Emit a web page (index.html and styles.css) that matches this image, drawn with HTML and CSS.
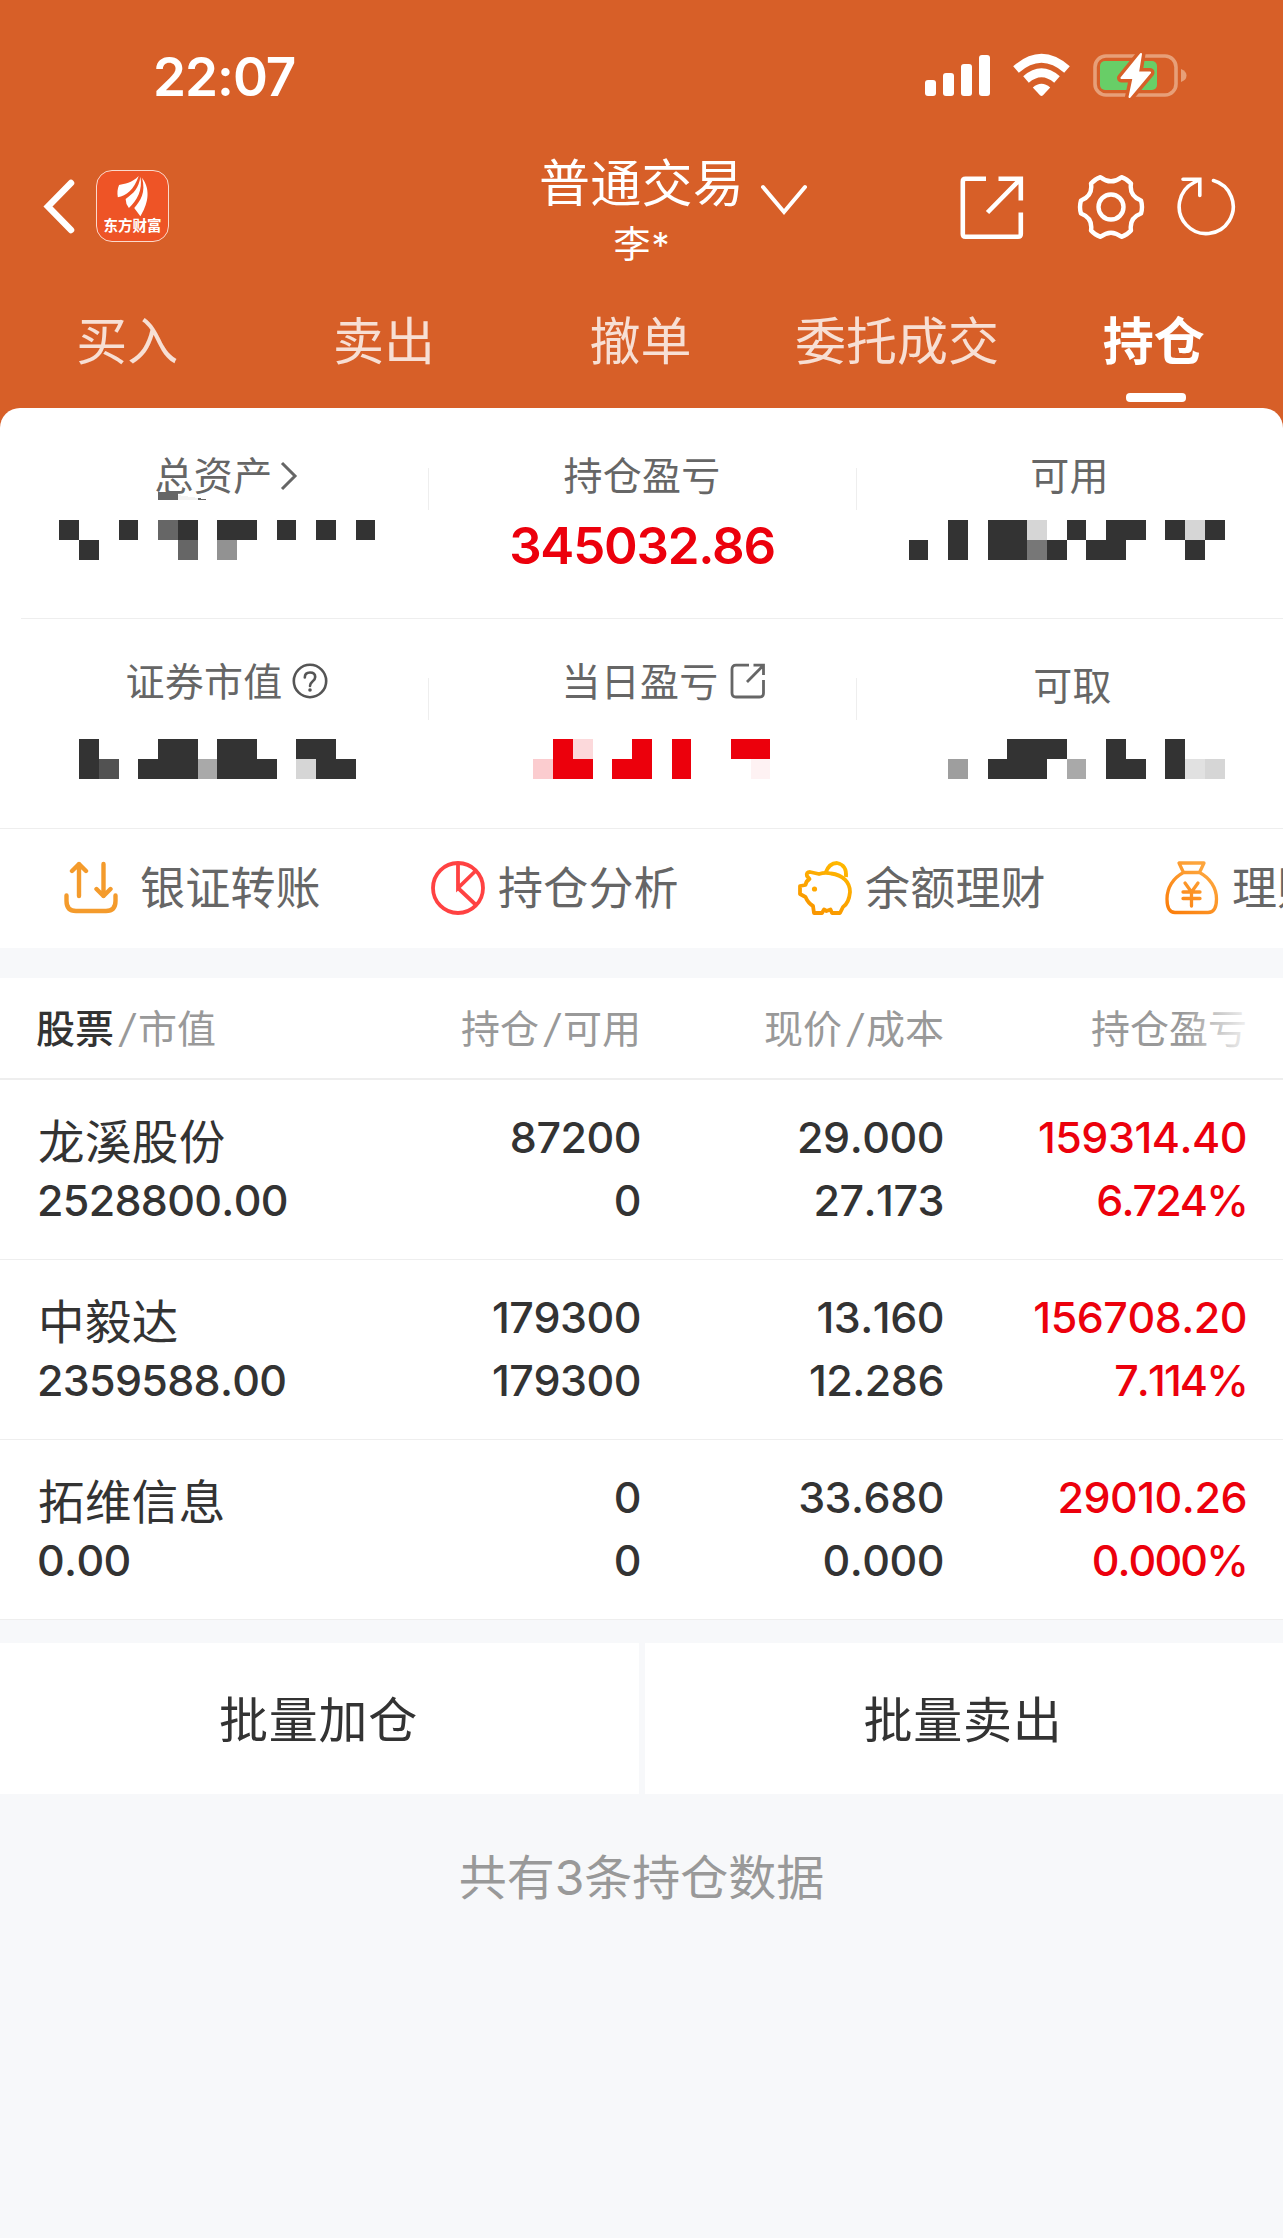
FILE: index.html
```html
<!DOCTYPE html>
<html lang="zh-CN">
<head>
    <meta charset="UTF-8">
    <meta name="viewport" content="width=device-width, initial-scale=1.0">
    <title>普通交易 - 持仓</title>
    <link rel="stylesheet" href="styles.css">
</head>
<body>
    <header class="header">
        <div class="status-bar">
            <span class="time">22:07</span>
            <svg class="status-icons" width="264" height="48" viewBox="0 0 264 48">
                <g fill="#fff">
                    <rect x="0" y="27" width="11" height="16" rx="3"/>
                    <rect x="18" y="20" width="11" height="23" rx="3"/>
                    <rect x="36" y="11" width="11" height="32" rx="3"/>
                    <rect x="54" y="2" width="11" height="41" rx="3"/>
                </g>
                <!-- wifi -->
                <g fill="none" stroke="#fff" stroke-width="8.5">
                    <path d="M91 16.500Q116.500 -6 142 16.500"/>
                    <path d="M101 26.500Q116.500 13 132 26.500"/>
                </g>
                <path d="M107.800 34.500Q116.500 27 125.200 34.500L118 42.300Q116.500 43.600 115 42.300Z" fill="#fff"/>
                <!-- battery -->
                <rect x="170" y="3" width="81" height="39" rx="11" fill="none" stroke="#e79f78" stroke-width="3.600"/>
                <path d="M256 16Q261.500 18 261.500 22.500T256 29Z" fill="#e79f78"/>
                <rect x="175" y="8" width="57" height="29" rx="5" fill="#68ce67"/>
                <path d="M216 1L196.500 25H208.500L204.500 44L225 19.500H213Z" fill="#fff" stroke="#d75f28" stroke-width="9" stroke-linejoin="round"/>
                <path d="M216 1L196.500 25H208.500L204.500 44L225 19.500H213Z" fill="#fff" stroke="#fff" stroke-width="2" stroke-linejoin="round"/>
            </svg>
        </div>

        <div class="nav">
            <div class="nav-left">
                <svg width="32" height="56" viewBox="0 0 32 56"><path d="M28 5L5 28.500L28 52" fill="none" stroke="#fff" stroke-width="6.500" stroke-linecap="round"/></svg>
                <div class="app-logo">
                    <svg width="40" height="50" viewBox="0 0 40 50" fill="#fff">
                        <path d="M27 0C18 9 10 9 3 11Q0 18 1.500 26C12 24 21 17 27 0Z"/>
                        <path d="M29 1C27 15 21 21 11 28Q11 34 15 39C25 30 32 17 29 1Z"/>
                        <path d="M31 2C36 20 29 30 21.500 39L29 49C37 36 43 18 31 2Z"/>
                    </svg>
                    <span>东方财富</span>
                </div>
            </div>
            <div class="nav-title">
                <div class="title">普通交易
                    <svg class="title-arrow" width="48" height="34" viewBox="0 0 48 34"><path d="M3 3L24 28L45 3" fill="none" stroke="#fff" stroke-width="4" stroke-linecap="round"/></svg>
                </div>
                <div class="user">李<span>*</span></div>
            </div>
            <div class="nav-right">
                <svg width="64" height="64" viewBox="0 0 64 64" fill="none" stroke="#fff" stroke-width="4.600">
                    <path d="M26 2.800H5.500Q2.800 2.800 2.800 5.500V58Q2.800 60.800 5.500 60.800H58Q60.800 60.800 60.800 58V36.500M38.500 2.800H60.800V24.500M60 3.500L27.500 36.500"/>
                </svg>
                <svg class="gear" width="68" height="66" viewBox="0 0 68 66" fill="none" stroke="#fff" stroke-width="4.400" stroke-linejoin="round">
                    <circle cx="34" cy="33" r="12.500"/>
                    <path d="M23.500 3.200Q34 11.500 44.500 3.200Q50 5 54 9.500Q52 22 64 26.500Q66 33 64 39.500Q52 44 54 56.500Q50 61 44.500 62.800Q34 54.500 23.500 62.800Q18 61 14 56.500Q16 44 4 39.500Q2 33 4 26.500Q16 22 14 9.500Q18 5 23.500 3.200Z"/>
                </svg>
                <svg class="refresh" width="60" height="60" viewBox="0 0 60 60" fill="none" stroke="#fff" stroke-width="3.600" stroke-linecap="round">
                    <path d="M36.500 3.600A27 27 0 1 1 17 5.500L22 3M6 2.200H22.800V18.500"/>
                </svg>
            </div>
        </div>

        <nav class="tabs">
            <a class="tab">买入</a>
            <a class="tab">卖出</a>
            <a class="tab">撤单</a>
            <a class="tab">委托成交</a>
            <a class="tab active">持仓</a>
        </nav>
    </header>

    <section class="summary">
        <div class="summary-row">
            <div class="cell first">
                <div class="label">总资产<svg class="more" width="18" height="32" viewBox="0 0 18 32"><path d="M2 3L15 16L2 29" fill="none" stroke="#666" stroke-width="3"/></svg></div>
                <!-- masked value -->
                <svg class="mask mask-top" width="356" height="68" viewBox="0 0 356 68" shape-rendering="crispEdges" fill="#333">
                    <path d="M138 0H158V8H138Z" fill="#666"/>
                    <path d="M158 3L178 6V8H158Z" fill="#f2f2f2"/>
                    <path d="M178 6L189 8H178Z" fill="#666"/>
                    <path d="M39 28h20v20h-20zM59 48h20v20h-20zM99 28h19v20h-19zM158 28h20v20h-20zM197 28h40v20h-40zM257 28h19v20h-19zM296 28h20v20h-20zM336 28h19v20h-19z"/>
                    <path d="M138 28h20v20h-20zM158 48h20v20h-20z" fill="#666"/>
                    <path d="M197 48h20v20h-20z" fill="#929292"/>
                </svg>
            </div>
            <div class="cell">
                <div class="label">持仓盈亏</div>
                <div class="value">345032.86</div>
            </div>
            <div class="cell last">
                <div class="label">可用</div>
                <svg class="mask" width="316" height="40" viewBox="0 0 316 40" shape-rendering="crispEdges" fill="#333">
                    <path d="M0 20h19v20h-19zM39 0h20v40h-20zM79 0h39v40h-39zM138 20h20v20h-20zM158 0h19v20h-19zM177 20h40v20h-40zM197 0h40v20h-40zM256 0h20v20h-20zM276 20h20v20h-20zM296 0h20v20h-20z"/>
                    <path d="M118 0h20v20h-20zM276 0h20v20h-20z" fill="#d6d6d6"/>
                    <path d="M118 20h20v20h-20z" fill="#777"/>
                </svg>
            </div>
        </div>
        <div class="summary-row second">
            <div class="cell first">
                <div class="label">证券市值<svg class="help" width="36" height="36" viewBox="0 0 36 36" fill="none" stroke="#555" stroke-width="2.600"><circle cx="18" cy="18" r="16.200"/><path d="M12.800 14.500Q12.800 9.500 18 9.500T23.200 14Q23.200 16.500 20.500 18.500Q18 20.500 18 23" stroke-linecap="round"/><circle cx="18" cy="27" r="1.800" fill="#555" stroke="none"/></svg></div>
                <svg class="mask" width="277" height="40" viewBox="0 0 277 40" shape-rendering="crispEdges" fill="#333">
                    <path d="M0 0h20v40h-20zM59 20h60v20h-60zM79 0h40v20h-40zM138 0h40v20h20v20h-60zM217 0h40v20h20v20h-40v-20h-20z"/>
                    <path d="M20 20h20v20h-20z" fill="#525252"/>
                    <path d="M119 20h19v20h-19z" fill="#a9a9a9"/>
                    <path d="M217 20h20v20h-20z" fill="#d6d6d6"/>
                </svg>
            </div>
            <div class="cell">
                <div class="label">当日盈亏<svg class="open" width="36" height="36" viewBox="0 0 36 36" fill="none" stroke="#666" stroke-width="2.800"><path d="M19 2.200H6Q2 2.200 2 6V30Q2 34 6 34H29.500Q33.500 34 33.500 30V17M23.500 2.200H33.500V12M33 2.700L17 19"/></svg></div>
                <svg class="mask mask-red" width="237" height="40" viewBox="0 0 237 40" shape-rendering="crispEdges" fill="#ec000c">
                    <path d="M20 0h20v20h20v20h-40zM99 0h20v40h-40v-20h20zM139 0h19v40h-19zM198 0h39v20h-39z"/>
                    <path d="M40 0h20v20h-20z" fill="#fcd9db"/>
                    <path d="M0 20h20v20h-20z" fill="#fbcccf"/>
                    <path d="M218 20h19v20h-19z" fill="#fef2f3"/>
                </svg>
            </div>
            <div class="cell last">
                <div class="label low">可取</div>
                <svg class="mask mask-take" width="277" height="40" viewBox="0 0 277 40" shape-rendering="crispEdges" fill="#333">
                    <path d="M40 20h19v-20h60v20h-20v20h-59zM158 0h20v20h20v20h-40zM217 0h20v40h-20z"/>
                    <path d="M0 20h20v20h-20z" fill="#9e9e9e"/>
                    <path d="M119 20h19v20h-19z" fill="#a9a9a9"/>
                    <path d="M237 20h20v20h-20z" fill="#e1e1e1"/>
                    <path d="M257 20h20v20h-20z" fill="#d6d6d6"/>
                </svg>
            </div>
        </div>
    </section>

    <section class="shortcuts">
        <a class="shortcut wide">
            <svg width="54" height="54" viewBox="0 0 54 54" fill="none" stroke="#f49b2c" stroke-width="4.400" stroke-linecap="round" stroke-linejoin="round">
                <path d="M2.500 34.500V40Q2.500 50 12 50H42Q51.500 50 51.500 40V34.500M15 35V3M8 10L15 3L22 10M39.500 3V35M32.500 28L39.500 35L46.500 28"/>
            </svg>
            <span>银证转账</span>
        </a>
        <a class="shortcut">
            <svg width="54" height="54" viewBox="0 0 54 54" fill="none" stroke="#ff4242" stroke-width="3.800">
                <circle cx="27" cy="27" r="25"/>
                <path d="M27 2V27L45 9.500M27 27L45 44"/>
            </svg>
            <span>持仓分析</span>
        </a>
        <a class="shortcut">
            <svg width="54" height="54" viewBox="0 0 54 54" fill="none" stroke="url(#pigFill)" stroke-width="3.800" stroke-linejoin="round">
                <defs>
                    <linearGradient id="pigFill" gradientUnits="userSpaceOnUse" x1="40" y1="0" x2="15" y2="54"><stop offset="0" stop-color="#ffb800"/><stop offset="1" stop-color="#f99500"/></linearGradient>
                </defs>
                <path d="M9 15Q8 11 12 11L21 13Q27 11 33 12.500C45 14 52 21 52 31Q51 42 45 46L42 52H34L32.500 48.500L28.500 50L26 48.500L24 52H16L15 45Q10 42 7.500 36L2 33V25L7.500 24Q8 20 11.500 18Z"/>
                <path d="M27.500 12Q31 2 39 2Q49 4 48 16"/>
                <circle cx="16.500" cy="28" r="2.600" fill="#ffa800" stroke="none"/>
            </svg>
            <span>余额理财</span>
        </a>
        <a class="shortcut">
            <svg width="54" height="54" viewBox="0 0 54 54" fill="none" stroke="url(#bagFill)" stroke-width="3.300" stroke-linejoin="round">
                <defs>
                    <linearGradient id="bagFill" gradientUnits="userSpaceOnUse" x1="40" y1="10" x2="5" y2="54"><stop offset="0" stop-color="#fda53c"/><stop offset="1" stop-color="#fb7c08"/></linearGradient>
                </defs>
                <path d="M14 2H39L34.500 11.500H18.500ZM18.500 11.500C8 17 2 27 2 38Q2 51.500 10 51.500H43Q51.500 51.500 51.500 38C51.500 27 45 17 34.500 11.500"/>
                <path d="M20 22L26.500 31L33 22M26.500 31V45M18 31H35M18 37.500H35" stroke-linecap="round"/>
            </svg>
            <span>理财</span>
        </a>
    </section>

    <section class="positions">
        <div class="row head">
            <div class="col"><b>股票</b><i>/</i>市值</div>
            <div class="col">持仓<i>/</i>可用</div>
            <div class="col">现价<i>/</i>成本</div>
            <div class="col">持仓盈亏</div>
        </div>
        <div class="row">
            <div class="col"><span class="name">龙溪股份</span><span>2528800.00</span></div>
            <div class="col"><span>87200</span><span>0</span></div>
            <div class="col"><span>29.000</span><span>27.173</span></div>
            <div class="col profit"><span>159314.40</span><span class="percent">6.724%</span></div>
        </div>
        <div class="row">
            <div class="col"><span class="name">中毅达</span><span>2359588.00</span></div>
            <div class="col"><span>179300</span><span>179300</span></div>
            <div class="col"><span>13.160</span><span>12.286</span></div>
            <div class="col profit"><span>156708.20</span><span class="percent">7.114%</span></div>
        </div>
        <div class="row">
            <div class="col"><span class="name">拓维信息</span><span>0.00</span></div>
            <div class="col"><span>0</span><span>0</span></div>
            <div class="col"><span>33.680</span><span>0.000</span></div>
            <div class="col profit"><span>29010.26</span><span class="percent">0.000%</span></div>
        </div>
    </section>

    <div class="actions">
        <button type="button">批量加仓</button>
        <button type="button">批量卖出</button>
    </div>
    <p class="footer-note">共有3条持仓数据</p>
</body>
</html>
```

FILE: styles.css
```css
* {
    box-sizing: border-box;
}

body {
    margin: 0;
    width: 1283px;
    min-height: 2238px;
    background: #f7f8fa;
    color: #333;
    font-family: Inter, "Noto Sans CJK SC", sans-serif;
    overflow-x: hidden;
}

svg {
    display: block;
    flex-shrink: 0;
}

/* Header */
.header {
    height: 428px;
    background: #d75f28;
    color: #fff;
}

.status-bar {
    display: flex;
    justify-content: space-between;
    height: 152px;
    padding: 53px 94px 0 153px;
}

.time {
    font-size: 53px;
    font-weight: 600;
    line-height: 48px;
    letter-spacing: -1px;
}

.nav {
    display: grid;
    grid-template-columns: 400px 1fr 400px;
    height: 131px;
}

.nav-left {
    display: flex;
    align-items: flex-start;
    padding: 18px 0 0 43px;
    gap: 21px;
}

.nav-left > svg {
    margin-top: 8px;
}

.app-logo {
    display: flex;
    flex-direction: column;
    align-items: center;
    width: 73px;
    height: 72px;
    padding-top: 5px;
    background: #ee5426;
    border: 1.5px solid #fbd9cc;
    border-radius: 16px;
}

.app-logo svg {
    width: 38px;
    height: 41px;
}

.app-logo span {
    font-size: 14.5px;
    font-weight: 700;
    line-height: 18px;
    white-space: nowrap;
}

.nav-title {
    text-align: center;
}

.title {
    position: relative;
    font-size: 51px;
    line-height: 63px;
    letter-spacing: 0.3px;
}

.title-arrow {
    position: absolute;
    left: 360px;
    top: 32px;
}

.user {
    font-size: 37px;
    line-height: 60px;
}

.user span {
    margin-left: 1px;
    font-size: 36px;
}

.nav-right {
    display: flex;
    align-items: flex-start;
    padding: 24px 0 0 77px;
}

.gear {
    margin: -2px 0 0 53px;
}

.refresh {
    margin: 1px 0 0 32px;
}

.tabs {
    display: flex;
    height: 126px;
}

.tab {
    position: relative;
    flex: 1;
    padding-right: 2px;
    text-align: center;
    font-size: 51px;
    line-height: 118px;
    color: #f7dfd4;
}

.tab.active {
    color: #fff;
    font-weight: 600;
}

.tab.active::after {
    content: "";
    position: absolute;
    left: 50%;
    top: 110px;
    width: 60px;
    height: 9px;
    margin-left: -29px;
    border-radius: 4px;
    background: #fff;
}

/* Summary card */
.summary {
    position: relative;
    height: 421px;
    margin-top: -20px;
    background: #fff;
    border-radius: 20px 20px 0 0;
    border-bottom: 1px solid #eee;
}

.summary-row {
    display: flex;
    height: 211px;
    margin-left: 21px;
    border-bottom: 1px solid #eee;
}

.summary-row.second {
    height: 209px;
    border-bottom: none;
}

.cell {
    position: relative;
    width: 428px;
    padding-top: 40px;
    text-align: center;
}

.cell.first {
    width: 407px;
}

.cell.last {
    width: 427px;
}

.cell + .cell::before {
    content: "";
    position: absolute;
    left: 0;
    top: 60px;
    width: 1px;
    height: 42px;
    background: #eee;
}

.second .cell + .cell::before {
    top: 59px;
}

.label {
    display: flex;
    justify-content: center;
    align-items: center;
    height: 50px;
    color: #666;
    font-size: 39px;
    letter-spacing: 0.3px;
}

.first .label {
    padding-left: 4px;
}

.second .label {
    margin-top: -5px;
}

.second .label.low {
    margin: -1px 0 -4px;
    padding-left: 6px;
}

.more {
    margin: 5px 0 0 8px;
}

.help {
    margin: 4px 0 0 9px;
}

.open {
    margin: 4px -48px 0 11px;
}

.second .cell:nth-child(2) .label {
    padding-right: 5px;
}

.mask {
    margin: 22px auto 0 53px;
}

.mask-top {
    margin: -6px 0 0 -1px;
}

.second .mask {
    margin: 35px 0 0 58px;
}

.second .mask-red {
    margin-left: 105px;
}

.second .mask-take {
    margin-left: 92px;
}

.value {
    margin-top: 18px;
    color: #ec000c;
    font-size: 51px;
    font-weight: 600;
    line-height: 60px;
    letter-spacing: -1.2px;
}

/* Shortcuts */
.shortcuts {
    display: flex;
    height: 119px;
    padding-left: 64px;
    background: #fff;
    overflow: hidden;
}

.shortcut {
    display: flex;
    align-items: center;
    flex: 0 0 367px;
    height: 117px;
    gap: 13px;
    color: #666;
    font-size: 45px;
    letter-spacing: 0.2px;
    white-space: nowrap;
}

.shortcut span {
    padding-bottom: 4px;
}

.shortcut.wide {
    gap: 22px;
}

/* Positions */
.positions {
    margin-top: 30px;
    background: #fff;
}

.row {
    display: grid;
    grid-template-columns: 340px 264px 303px 303px;
    height: 180px;
    padding: 26px 36px 0 37px;
    border-bottom: 1px solid #eee;
}

.col {
    display: flex;
    flex-direction: column;
    text-align: right;
    font-size: 43px;
    font-weight: 500;
    font-kerning: none;
    letter-spacing: -0.5px;
}

.col span {
    height: 63px;
    line-height: 63px;
}

.col:first-child {
    text-align: left;
    letter-spacing: -0.7px;
}

.col .name {
    position: relative;
    top: 5px;
    left: 1px;
    font-size: 46.5px;
    font-weight: 400;
    letter-spacing: 0.4px;
}

.col .percent {
    letter-spacing: -1.9px;
}

.profit {
    color: #ec000c;
}

.row.head {
    position: relative;
    height: 102px;
    padding-top: 0;
    padding-left: 36px;
    grid-template-columns: 341px 264px 303px 303px;
    border-bottom: 2px solid #eee;
}

.head .col {
    display: block;
    color: #999;
    font-size: 39px;
    font-weight: 400;
    line-height: 102px;
    letter-spacing: 0;
}

.head i {
    margin: 0 4px 0 6px;
}

.head b {
    color: #333;
    font-weight: 500;
}

.head::after {
    content: "";
    position: absolute;
    right: 0;
    top: 0;
    width: 100px;
    height: 100px;
    background: linear-gradient(to right, rgba(255, 255, 255, 0), #fff 75%);
}

/* Bottom */
.actions {
    display: grid;
    grid-template-columns: 639px 638px;
    gap: 6px;
    margin-top: 23px;
}

.actions button {
    height: 151px;
    padding: 0 2px 4px 0;
    border: none;
    background: #fff;
    color: #333;
    font-family: inherit;
    font-size: 49px;
    letter-spacing: 0.8px;
}

.footer-note {
    margin: 48px 0 0;
    text-align: center;
    color: #999;
    font-size: 48px;
    line-height: 72px;
}
```
